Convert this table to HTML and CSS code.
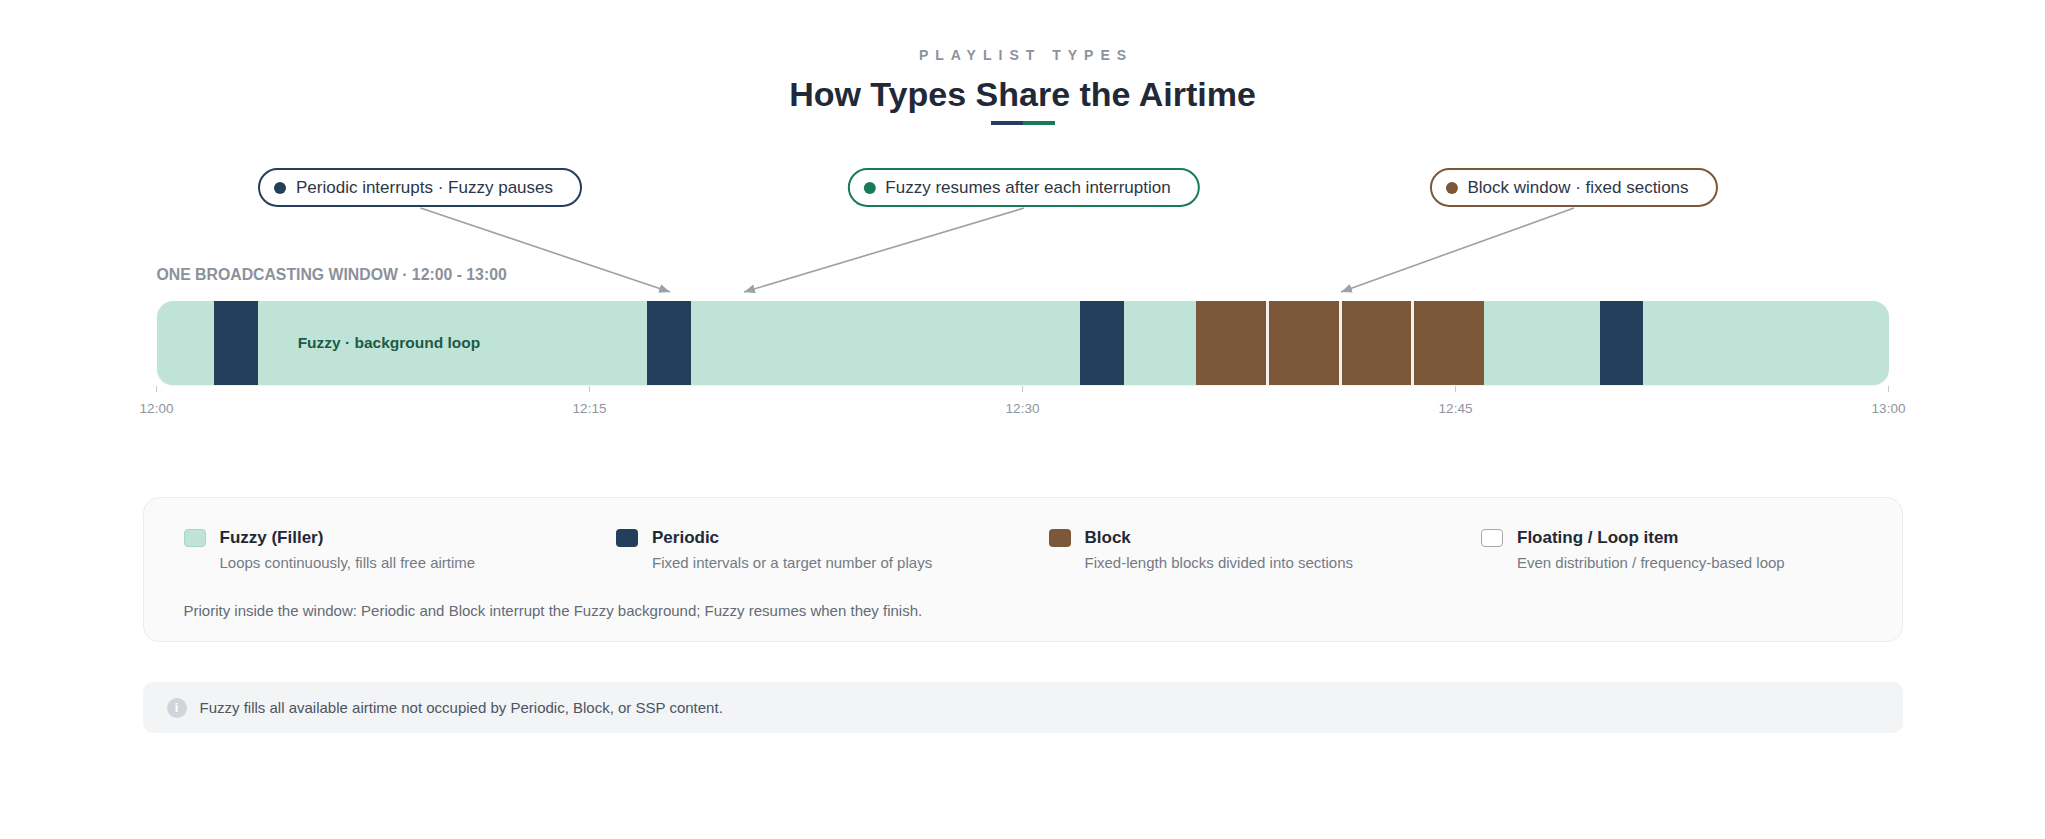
FILE: index.html
```html
<!DOCTYPE html>
<html lang="en">
<head>
<meta charset="utf-8">
<title>How Types Share the Airtime</title>
<link rel="stylesheet" href="styles.css">
</head>
<body>
<main class="page">
  <header class="intro">
    <div class="eyebrow">PLAYLIST TYPES</div>
    <h1 class="title">How Types Share the Airtime</h1>
    <div class="rule"><span class="rule-a"></span><span class="rule-b"></span></div>
  </header>

  <section class="timeline">
    <div class="callouts">
      <div class="pill pill-periodic"><span class="dot"></span>Periodic interrupts · Fuzzy pauses</div>
      <div class="pill pill-fuzzy"><span class="dot"></span>Fuzzy resumes after each interruption</div>
      <div class="pill pill-block"><span class="dot"></span>Block window · fixed sections</div>
      <svg class="arrows" width="1732" height="133" viewBox="0 0 1732 133" aria-hidden="true">
        <defs>
          <marker id="head" markerUnits="userSpaceOnUse" markerWidth="12" markerHeight="10" refX="11" refY="4.5" orient="auto">
            <path d="M0,0 L11,4.5 L0,9 Z" fill="#9aa1ab"/>
          </marker>
        </defs>
        <line x1="263.5" y1="40" x2="513" y2="124" stroke="#9aa1ab" stroke-width="1.6" marker-end="url(#head)"/>
        <line x1="867" y1="40" x2="587" y2="124" stroke="#9aa1ab" stroke-width="1.6" marker-end="url(#head)"/>
        <line x1="1417" y1="40" x2="1184" y2="124" stroke="#9aa1ab" stroke-width="1.6" marker-end="url(#head)"/>
      </svg>
    </div>

    <div class="window-label">ONE BROADCASTING WINDOW · 12:00 - 13:00</div>

    <div class="bar">
      <div class="seg periodic" style="left:3.3333%;width:2.5%"></div>
      <div class="seg periodic" style="left:28.3333%;width:2.5%"></div>
      <div class="seg periodic" style="left:53.3333%;width:2.5%"></div>
      <div class="seg periodic" style="left:83.3333%;width:2.5%"></div>
      <div class="seg block" style="left:60%;width:16.6667%">
        <span class="section"></span><span class="section"></span><span class="section"></span><span class="section"></span>
      </div>
      <span class="bar-label">Fuzzy · background loop</span>
    </div>

    <div class="axis">
      <div class="tick"><span class="tick-mark"></span><span class="tick-label">12:00</span></div>
      <div class="tick"><span class="tick-mark"></span><span class="tick-label">12:15</span></div>
      <div class="tick"><span class="tick-mark"></span><span class="tick-label">12:30</span></div>
      <div class="tick"><span class="tick-mark"></span><span class="tick-label">12:45</span></div>
      <div class="tick"><span class="tick-mark"></span><span class="tick-label">13:00</span></div>
    </div>
  </section>

  <section class="legend">
    <div class="legend-grid">
      <div class="legend-item">
        <span class="swatch sw-fuzzy"></span>
        <div class="legend-text">
          <div class="legend-title">Fuzzy (Filler)</div>
          <div class="legend-desc">Loops continuously, fills all free airtime</div>
        </div>
      </div>
      <div class="legend-item">
        <span class="swatch sw-periodic"></span>
        <div class="legend-text">
          <div class="legend-title">Periodic</div>
          <div class="legend-desc">Fixed intervals or a target number of plays</div>
        </div>
      </div>
      <div class="legend-item">
        <span class="swatch sw-block"></span>
        <div class="legend-text">
          <div class="legend-title">Block</div>
          <div class="legend-desc">Fixed-length blocks divided into sections</div>
        </div>
      </div>
      <div class="legend-item">
        <span class="swatch sw-floating"></span>
        <div class="legend-text">
          <div class="legend-title">Floating / Loop item</div>
          <div class="legend-desc">Even distribution / frequency-based loop</div>
        </div>
      </div>
    </div>
    <p class="legend-note">Priority inside the window: Periodic and Block interrupt the Fuzzy background; Fuzzy resumes when they finish.</p>
  </section>

  <div class="info">
    <span class="info-icon">i</span>
    <span class="info-text">Fuzzy fills all available airtime not occupied by Periodic, Block, or SSP content.</span>
  </div>
</main>
</body>
</html>
```

FILE: styles.css
```css
* { box-sizing: border-box; }

html, body {
  margin: 0;
  padding: 0;
  background: #ffffff;
}

body {
  font-family: "Liberation Sans", Arial, sans-serif;
  color: #1f2937;
}

.page {
  width: 1760px;
  margin: 0 auto;
  padding-top: 45px;
}

/* Intro */
.intro {
  display: flex;
  flex-direction: column;
  align-items: center;
}

.eyebrow {
  font-size: 14px;
  line-height: 20px;
  font-weight: 700;
  letter-spacing: 7px;
  padding-left: 7px;
  color: #8d939c;
}

.title {
  margin: 9px 0 0;
  font-size: 34px;
  line-height: 40px;
  font-weight: 700;
  color: #1f2937;
}

.rule {
  display: flex;
  margin-top: 7px;
  height: 4px;
}

.rule-a, .rule-b {
  width: 32px;
  height: 4px;
}

.rule-a { background: #243f5c; }
.rule-b { background: #177a5b; }

/* Timeline */
.timeline {
  margin-top: 43px;
  padding: 0 14px;
}

.callouts {
  position: relative;
  height: 40px;
}

.pill {
  position: absolute;
  top: 0;
  height: 39px;
  display: flex;
  align-items: center;
  gap: 10px;
  padding: 0 27px 0 14px;
  border: 2px solid;
  border-radius: 20px;
  background: #ffffff;
  font-size: 17px;
  color: #2d3646;
  white-space: nowrap;
  transform: translateX(-50%);
  z-index: 2;
}

.dot {
  width: 12px;
  height: 12px;
  border-radius: 50%;
  flex: none;
}

.pill-periodic { left: 263.5px; border-color: #243f5c; }
.pill-periodic .dot { background: #243f5c; }
.pill-fuzzy { left: 867px; border-color: #177a5b; }
.pill-fuzzy .dot { background: #177a5b; }
.pill-block { left: 1417px; border-color: #7a5839; }
.pill-block .dot { background: #7a5839; }

.arrows {
  position: absolute;
  left: 0;
  top: 0;
  overflow: visible;
  z-index: 1;
}

.window-label {
  margin-top: 57px;
  font-size: 15.8px;
  line-height: 20px;
  font-weight: 700;
  color: #8b919a;
}

.bar {
  position: relative;
  margin-top: 16px;
  height: 84px;
  background: #c0e3d7;
  border-radius: 16px;
  overflow: hidden;
  box-shadow: 0 1px 1px rgba(0, 0, 0, 0.06);
}

.seg {
  position: absolute;
  top: 0;
  bottom: 0;
}

.periodic { background: #243f5c; }

.block {
  display: flex;
  gap: 3px;
  background: #f4f1ec;
}

.section {
  flex: 1;
  background: #7a5839;
}

.bar-label {
  position: absolute;
  left: 8.15%;
  top: 50%;
  transform: translateY(-50%);
  font-size: 15.5px;
  font-weight: 700;
  color: #1d5a47;
  white-space: nowrap;
}

.axis {
  display: flex;
  justify-content: space-between;
  margin-top: 1px;
  height: 31px;
}

.tick {
  width: 0;
  display: flex;
  flex-direction: column;
  align-items: center;
}

.tick-mark {
  width: 1px;
  height: 6px;
  flex: none;
  background: #c4c8cf;
}

.tick-label {
  margin-top: 8px;
  font-size: 13.5px;
  line-height: 18px;
  color: #8f959e;
  white-space: nowrap;
}

/* Legend */
.legend {
  margin-top: 80px;
  padding: 29px 40px 20px;
  background: #fafafa;
  border: 1px solid #ececec;
  border-radius: 16px;
}

.legend-grid {
  display: grid;
  grid-template-columns: repeat(4, 1fr);
  gap: 52px;
}

.legend-item {
  display: flex;
  align-items: flex-start;
  gap: 14px;
}

.swatch {
  flex: none;
  width: 22px;
  height: 18px;
  margin-top: 2px;
  border-radius: 4px;
}

.sw-fuzzy { background: #c0e3d7; border: 1px solid #a9d6c6; }
.sw-periodic { background: #243f5c; }
.sw-block { background: #7a5839; }
.sw-floating { background: #ffffff; border: 1.5px solid #a3a9b2; }

.legend-title {
  font-size: 17px;
  line-height: 22px;
  font-weight: 700;
  color: #1f2937;
}

.legend-desc {
  margin-top: 4px;
  font-size: 15px;
  line-height: 20px;
  color: #737a85;
}

.legend-note {
  margin: 28px 0 0;
  font-size: 15px;
  line-height: 20px;
  color: #646b76;
}

/* Info */
.info {
  margin-top: 40px;
  height: 51px;
  display: flex;
  align-items: center;
  gap: 13px;
  padding: 0 24px;
  background: #f3f4f6;
  border-radius: 10px;
}

.info-icon {
  flex: none;
  width: 20px;
  height: 20px;
  border-radius: 50%;
  background: #d1d5db;
  color: #ffffff;
  font-size: 13px;
  font-weight: 700;
  line-height: 20px;
  text-align: center;
}

.info-text {
  font-size: 15px;
  color: #4b5563;
}
```
